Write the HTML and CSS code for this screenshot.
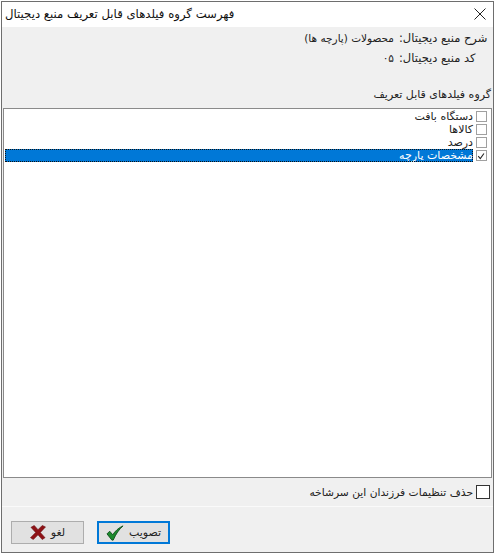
FILE: index.html
```html
<!DOCTYPE html>
<html lang="fa">
<head>
    <meta charset="UTF-8">
    <meta name="viewport" content="width=device-width, initial-scale=1.0">
    <title>فهرست گروه فیلدهای قابل تعریف منبع دیجیتال</title>
    <link rel="stylesheet" href="styles.css">
</head>
<body>
    <div class="window">
        <header class="title-bar">
            <button class="close-button" aria-label="بستن">
                <svg width="12" height="12" viewBox="0 0 12 12"><path d="M0.5 0.5L11.5 11.5M11.5 0.5L0.5 11.5" stroke="#222" stroke-width="1" fill="none"/></svg>
            </button>
            <h1>فهرست گروه فیلدهای قابل تعریف منبع دیجیتال</h1>
        </header>
        <section class="info">
            <div class="info-row">
                <span class="info-label">شرح منبع دیجیتال:</span>
                <span class="info-value">محصولات (پارچه ها)</span>
            </div>
            <div class="info-row">
                <span class="info-label">کد منبع دیجیتال:</span>
                <span class="info-value">۰۵</span>
            </div>
        </section>
        <p class="list-label">گروه فیلدهای قابل تعریف</p>
        <ul class="check-list">
            <li><span class="box"></span><span>دستگاه بافت</span></li>
            <li><span class="box"></span><span>کالاها</span></li>
            <li><span class="box"></span><span>درصد</span></li>
            <li class="selected">
                <span class="box">
                    <svg width="11" height="11" viewBox="0 0 11 11"><path d="M1.5 5L4 8L8.500 1.800" stroke="#222" stroke-width="1.300" fill="none"/></svg>
                </span>
                <span class="row-text">مشخصات پارچه</span>
            </li>
        </ul>
        <label class="children-option">
            <span class="big-box"></span>
            <span class="option-text">حذف تنظیمات فرزندان این سرشاخه</span>
        </label>
        <footer class="actions">
            <button class="btn btn-default">
                <span>تصویب</span>
                <svg width="18" height="16" viewBox="0 0 20 18"><path d="M1 10L4 7L7.5 11C10 7 13.5 3.5 19 1C14.500 5 11 10 8 17L6.500 17Z" fill="#1c8a2c" stroke="#0c4d18" stroke-width="1"/></svg>
            </button>
            <button class="btn">
                <span>لغو</span>
                <svg width="16" height="15" viewBox="0 0 17 16"><path d="M1 2.500L4.500 0.500L8.500 5L13 0.500L16.500 2L11 8L16 13.500L13 15.500L8.500 10.500L3.500 15.500L0.500 13.500L6 8Z" fill="#8e1216" stroke="#6a0c10" stroke-width="0.6"/></svg>
            </button>
        </footer>
    </div>
</body>
</html>
```

FILE: styles.css
```css
html, body {
    height: 100%;
}
body {
    margin: 0;
    background-color: #fff;
    color: #222;
    font-family: 'DejaVu Sans', sans-serif;
    font-size: 11px;
    overflow: hidden;
}
.window {
    box-sizing: border-box;
    width: 493px;
    height: 552px;
    margin: 1px 0 0 1px;
    border: 1px solid #6e6e6e;
    background-color: #f0f0f0;
    display: flex;
    flex-direction: column;
}
.title-bar {
    box-sizing: border-box;
    height: 25px;
    flex-shrink: 0;
    background-color: #fff;
    display: flex;
    align-items: center;
    justify-content: space-between;
    direction: ltr;
    flex-direction: row-reverse;
    padding: 0 6px 1px 3px;
}
.title-bar h1 {
    margin: 0;
    font-size: 11.700px;
    font-weight: normal;
    direction: rtl;
    color: #111;
}
.close-button {
    border: none;
    background: none;
    padding: 0;
    width: 14px;
    height: 14px;
    display: flex;
    align-items: center;
    justify-content: center;
}
.info {
    direction: rtl;
    padding: 1px 4px 0 0;
}
.info-row {
    display: flex;
    height: 20px;
    align-items: center;
    gap: 5px;
}
.info-label {
    width: 90px;
    font-size: 11.500px;
    text-align: left;
    white-space: nowrap;
}
.info-value {
    font-size: 10.500px;
}
.list-label {
    direction: rtl;
    margin: 20px 2px 6px 0;
    height: 14px;
    line-height: 14px;
}
.check-list {
    list-style: none;
    direction: rtl;
    margin: 0 1px;
    padding: 1px 4px 0 0;
    height: 370px;
    box-sizing: border-box;
    flex-shrink: 0;
    background-color: #fff;
    border: 1px solid #8a8a8a;
}
.check-list li {
    display: flex;
    align-items: center;
    height: 13px;
    gap: 3px;
    line-height: 13px;
}
.box {
    box-sizing: border-box;
    width: 11px;
    height: 11px;
    border: 1px solid #a0a0a0;
    background-color: #fff;
    flex-shrink: 0;
    display: flex;
}
.check-list .selected {
    margin-left: 1px;
}
.row-text {
    flex: 1;
    height: 13px;
    background-color: #0078d7;
    color: #fff;
    outline: 1px dotted #111;
    outline-offset: -1px;
}
.children-option {
    direction: rtl;
    display: flex;
    align-items: center;
    gap: 3px;
    padding: 7px 3px 0 0;
}
.option-text {
    font-size: 10.700px;
}
.big-box {
    box-sizing: border-box;
    width: 14px;
    height: 14px;
    background-color: #fff;
    border: 1px solid #333;
}
.actions {
    direction: ltr;
    margin-top: 7px;
    border-top: 1px solid #fafafa;
    padding: 14px 9px 0;
    display: flex;
    flex-direction: row-reverse;
    justify-content: flex-end;
    gap: 13px;
}
.btn {
    box-sizing: border-box;
    width: 73px;
    height: 23px;
    background-color: #e1e1e1;
    border: 1px solid #adadad;
    font-family: inherit;
    font-size: 11px;
    color: #222;
    padding: 0;
    display: flex;
    align-items: center;
    justify-content: center;
    gap: 5px;
    direction: rtl;
}
.btn-default {
    border: 2px solid #0078d7;
}
```
